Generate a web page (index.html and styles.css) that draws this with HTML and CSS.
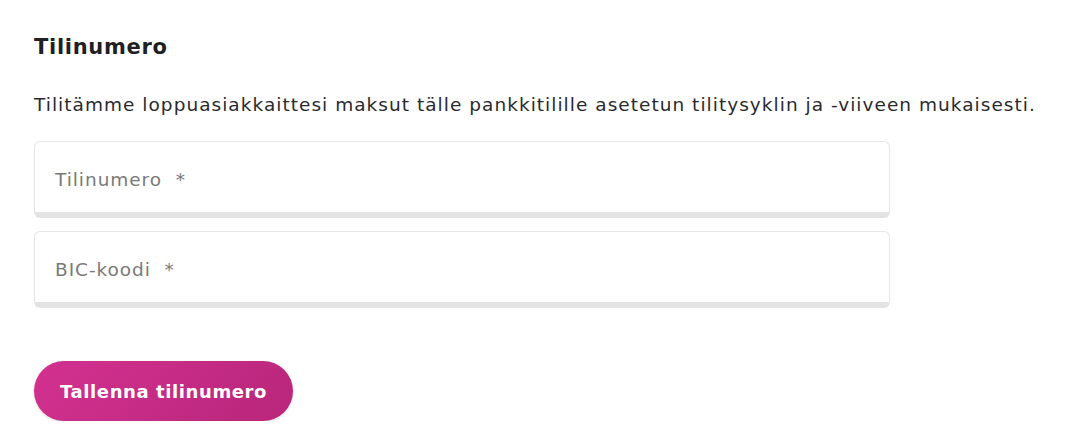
FILE: index.html
```html
<!DOCTYPE html>
<html lang="fi">
<head>
<meta charset="utf-8">
<link rel="stylesheet" href="styles.css">
</head>
<body>
<main class="panel">
  <h2 class="title">Tilinumero</h2>
  <p class="lead">Tilitämme loppuasiakkaittesi maksut tälle pankkitilille asetetun tilitysyklin ja -viiveen mukaisesti.</p>
  <div class="fields">
    <label class="field"><span class="placeholder">Tilinumero&nbsp; *</span></label>
    <label class="field"><span class="placeholder">BIC-koodi&nbsp; *</span></label>
  </div>
  <button class="save">Tallenna tilinumero</button>
</main>
</body>
</html>
```
FILE: styles.css
```css
html, body {
  margin: 0;
  padding: 0;
  background: #ffffff;
}
body {
  font-family: "DejaVu Sans", "Open Sans", sans-serif;
  color: #222226;
}
.panel {
  padding: 33px 34px 0 34px;
  display: flex;
  flex-direction: column;
  align-items: flex-start;
}
.title {
  margin: 0;
  font-size: 21px;
  font-weight: 700;
  letter-spacing: 0.7px;
  line-height: 28px;
  color: #1f1f24;
}
.lead {
  margin: 31px 0 0 0;
  font-size: 18.5px;
  letter-spacing: 1.03px;
  line-height: 26px;
  color: #2a2a2e;
  white-space: nowrap;
}
.fields {
  margin-top: 23px;
  display: flex;
  flex-direction: column;
  gap: 13px;
  width: 856px;
}
.field {
  box-sizing: border-box;
  height: 77px;
  border: 1px solid #e6e6e6;
  border-bottom: 6px solid #e3e3e3;
  border-radius: 6px;
  background: #fff;
  display: flex;
  align-items: center;
  padding: 4px 20px 0 20px;
}
.placeholder {
  font-size: 18.5px;
  letter-spacing: 0.95px;
  color: #7a7a7a;
}
.save {
  margin-top: 53px;
  height: 60px;
  padding: 0 26px;
  border: none;
  border-radius: 30px;
  background: linear-gradient(135deg, #d3318f 0%, #b8267b 100%);
  color: #fff;
  font-family: "DejaVu Sans", "Open Sans", sans-serif;
  font-size: 18px;
  letter-spacing: 0.6px;
  font-weight: 700;
  box-shadow: 0 1px 3px rgba(0,0,0,0.15);
}
```
